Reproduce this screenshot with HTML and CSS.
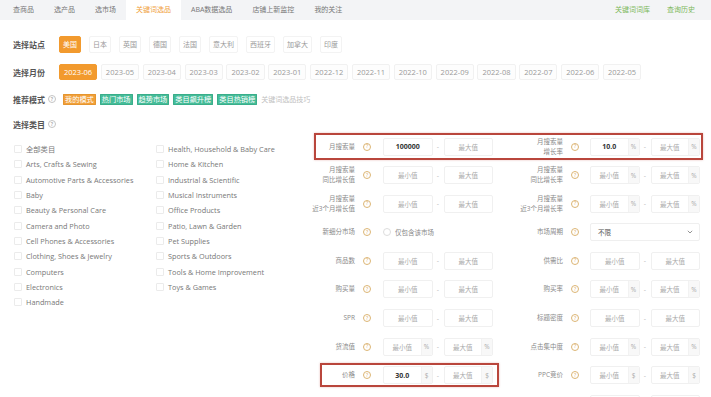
FILE: index.html
```html
<!DOCTYPE html>
<html lang="zh-CN">
<head>
    <meta charset="UTF-8">
    <meta name="viewport" content="width=device-width, initial-scale=1.0">
    <title>关键词选品</title>
    <link rel="stylesheet" href="styles.css">
</head>
<body>
    <div class="topnav">
        <div class="nav-left">
            <span class="nav-item">查商品</span>
            <span class="nav-item">选产品</span>
            <span class="nav-item">选市场</span>
            <span class="nav-item active">关键词选品</span>
            <span class="nav-item">ABA数据选品</span>
            <span class="nav-item">店铺上新监控</span>
            <span class="nav-item">我的关注</span>
        </div>
        <div class="nav-right">
            <span class="nav-link">关键词词库</span>
            <span class="nav-link">查询历史</span>
        </div>
    </div>

    <div class="main">
        <div class="filter-row site-row">
            <span class="filter-label">选择站点</span>
            <span class="opt active">美国</span>
            <span class="opt">日本</span>
            <span class="opt">英国</span>
            <span class="opt">德国</span>
            <span class="opt">法国</span>
            <span class="opt">意大利</span>
            <span class="opt">西班牙</span>
            <span class="opt">加拿大</span>
            <span class="opt">印度</span>
        </div>

        <div class="filter-row month-row">
            <span class="filter-label">选择月份</span>
            <span class="mopt active">2023-06</span>
            <span class="mopt">2023-05</span>
            <span class="mopt">2023-04</span>
            <span class="mopt">2023-03</span>
            <span class="mopt">2023-02</span>
            <span class="mopt">2023-01</span>
            <span class="mopt">2022-12</span>
            <span class="mopt">2022-11</span>
            <span class="mopt">2022-10</span>
            <span class="mopt">2022-09</span>
            <span class="mopt">2022-08</span>
            <span class="mopt">2022-07</span>
            <span class="mopt">2022-06</span>
            <span class="mopt">2022-05</span>
        </div>

        <div class="filter-row mode-row">
            <span class="filter-label">推荐模式 <i class="help gray">?</i></span>
            <div class="tags">
                <span class="tag orange">我的模式</span>
                <span class="tag">热门市场</span>
                <span class="tag">趋势市场</span>
                <span class="tag">类目飙升榜</span>
                <span class="tag">类目热销榜</span>
                <span class="tip">关键词选品技巧</span>
            </div>
        </div>

        <div class="filter-row cat-head">
            <span class="filter-label">选择类目 <i class="help gray">?</i></span>
        </div>

        <div class="content">
            <div class="cats">
                <ul class="cat-col">
                    <li><span class="box"></span>全部类目</li>
                    <li><span class="box"></span>Arts, Crafts &amp; Sewing</li>
                    <li><span class="box"></span>Automotive Parts &amp; Accessories</li>
                    <li><span class="box"></span>Baby</li>
                    <li><span class="box"></span>Beauty &amp; Personal Care</li>
                    <li><span class="box"></span>Camera and Photo</li>
                    <li><span class="box"></span>Cell Phones &amp; Accessories</li>
                    <li><span class="box"></span>Clothing, Shoes &amp; Jewelry</li>
                    <li><span class="box"></span>Computers</li>
                    <li><span class="box"></span>Electronics</li>
                    <li><span class="box"></span>Handmade</li>
                </ul>
                <ul class="cat-col">
                    <li><span class="box"></span>Health, Household &amp; Baby Care</li>
                    <li><span class="box"></span>Home &amp; Kitchen</li>
                    <li><span class="box"></span>Industrial &amp; Scientific</li>
                    <li><span class="box"></span>Musical Instruments</li>
                    <li><span class="box"></span>Office Products</li>
                    <li><span class="box"></span>Patio, Lawn &amp; Garden</li>
                    <li><span class="box"></span>Pet Supplies</li>
                    <li><span class="box"></span>Sports &amp; Outdoors</li>
                    <li><span class="box"></span>Tools &amp; Home Improvement</li>
                    <li><span class="box"></span>Toys &amp; Games</li>
                </ul>
            </div>

            <div class="form">
                <div class="form-row mark">
                    <div class="field field-l">
                        <span class="f-label">月搜索量</span><i class="help">?</i>
                        <div class="range">
                            <div class="inp filled">100000</div><span class="dash">-</span><div class="inp">最大值</div>
                        </div>
                    </div>
                    <div class="field field-r">
                        <span class="f-label"><span>月搜索量</span><span>增长率</span></span><i class="help">?</i>
                        <div class="range">
                            <div class="inp filled"><span class="val">10.0</span><span class="addon">%</span></div><span class="dash">-</span><div class="inp"><span class="val">最大值</span><span class="addon">%</span></div>
                        </div>
                    </div>
                </div>

                <div class="form-row">
                    <div class="field field-l">
                        <span class="f-label"><span>月搜索量</span><span>同比增长值</span></span><i class="help">?</i>
                        <div class="range">
                            <div class="inp">最小值</div><span class="dash">-</span><div class="inp">最大值</div>
                        </div>
                    </div>
                    <div class="field field-r">
                        <span class="f-label"><span>月搜索量</span><span>同比增长率</span></span><i class="help">?</i>
                        <div class="range">
                            <div class="inp"><span class="val">最小值</span><span class="addon">%</span></div><span class="dash">-</span><div class="inp"><span class="val">最大值</span><span class="addon">%</span></div>
                        </div>
                    </div>
                </div>

                <div class="form-row">
                    <div class="field field-l">
                        <span class="f-label"><span>月搜索量</span><span>近3个月增长值</span></span><i class="help">?</i>
                        <div class="range">
                            <div class="inp">最小值</div><span class="dash">-</span><div class="inp">最大值</div>
                        </div>
                    </div>
                    <div class="field field-r">
                        <span class="f-label"><span>月搜索量</span><span>近3个月增长率</span></span><i class="help">?</i>
                        <div class="range">
                            <div class="inp"><span class="val">最小值</span><span class="addon">%</span></div><span class="dash">-</span><div class="inp"><span class="val">最大值</span><span class="addon">%</span></div>
                        </div>
                    </div>
                </div>

                <div class="form-row">
                    <div class="field field-l">
                        <span class="f-label">新细分市场</span><i class="help">?</i>
                        <label class="radio"><span class="dot"></span>仅包含该市场</label>
                    </div>
                    <div class="field field-r">
                        <span class="f-label">市场周期</span><i class="help">?</i>
                        <div class="select">
                            <span>不限</span>
                            <svg width="6" height="4" viewBox="0 0 6 4"><path d="M0.8 0.8 L3 3 L5.2 0.8" fill="none" stroke="#888" stroke-width="0.9"/></svg>
                        </div>
                    </div>
                </div>

                <div class="form-row">
                    <div class="field field-l">
                        <span class="f-label">商品数</span><i class="help">?</i>
                        <div class="range">
                            <div class="inp">最小值</div><span class="dash">-</span><div class="inp">最大值</div>
                        </div>
                    </div>
                    <div class="field field-r">
                        <span class="f-label">供需比</span><i class="help">?</i>
                        <div class="range">
                            <div class="inp">最小值</div><span class="dash">-</span><div class="inp">最大值</div>
                        </div>
                    </div>
                </div>

                <div class="form-row">
                    <div class="field field-l">
                        <span class="f-label">购买量</span><i class="help">?</i>
                        <div class="range">
                            <div class="inp">最小值</div><span class="dash">-</span><div class="inp">最大值</div>
                        </div>
                    </div>
                    <div class="field field-r">
                        <span class="f-label">购买率</span><i class="help">?</i>
                        <div class="range">
                            <div class="inp"><span class="val">最小值</span><span class="addon">%</span></div><span class="dash">-</span><div class="inp"><span class="val">最大值</span><span class="addon">%</span></div>
                        </div>
                    </div>
                </div>

                <div class="form-row">
                    <div class="field field-l">
                        <span class="f-label">SPR</span><i class="help">?</i>
                        <div class="range">
                            <div class="inp">最小值</div><span class="dash">-</span><div class="inp">最大值</div>
                        </div>
                    </div>
                    <div class="field field-r">
                        <span class="f-label">标题密度</span><i class="help">?</i>
                        <div class="range">
                            <div class="inp">最小值</div><span class="dash">-</span><div class="inp">最大值</div>
                        </div>
                    </div>
                </div>

                <div class="form-row">
                    <div class="field field-l">
                        <span class="f-label">货流值</span><i class="help">?</i>
                        <div class="range">
                            <div class="inp"><span class="val">最小值</span><span class="addon">%</span></div><span class="dash">-</span><div class="inp"><span class="val">最大值</span><span class="addon">%</span></div>
                        </div>
                    </div>
                    <div class="field field-r">
                        <span class="f-label">点击集中度</span><i class="help">?</i>
                        <div class="range">
                            <div class="inp"><span class="val">最小值</span><span class="addon">%</span></div><span class="dash">-</span><div class="inp"><span class="val">最大值</span><span class="addon">%</span></div>
                        </div>
                    </div>
                </div>

                <div class="form-row">
                    <div class="field field-l mark">
                        <span class="f-label">价格</span><i class="help">?</i>
                        <div class="range">
                            <div class="inp filled"><span class="val">30.0</span><span class="addon">$</span></div><span class="dash">-</span><div class="inp"><span class="val">最大值</span><span class="addon">$</span></div>
                        </div>
                    </div>
                    <div class="field field-r">
                        <span class="f-label">PPC竞价</span><i class="help">?</i>
                        <div class="range">
                            <div class="inp"><span class="val">最小值</span><span class="addon">$</span></div><span class="dash">-</span><div class="inp"><span class="val">最大值</span><span class="addon">$</span></div>
                        </div>
                    </div>
                </div>

                <!-- next row only peeks in at the bottom edge -->
                <div class="form-row">
                    <div class="field field-l"></div>
                    <div class="field field-r">
                        <span class="f-label"></span><span class="help-space"></span>
                        <div class="range">
                            <div class="inp"></div><span class="dash"></span><div class="inp"></div>
                        </div>
                    </div>
                </div>
            </div>
        </div>
    </div>
</body>
</html>
```

FILE: styles.css
```css
html, body{
    overflow: hidden;
}
body{
    margin: 0;
    padding: 0;
    font-family: "Open Sans", "Noto Sans CJK SC", sans-serif;
    background-color: #fff;
    color: #666;
}

/* top navigation */
.topnav{
    display: flex;
    justify-content: space-between;
    height: 20px;
    padding: 0 16px 0 3px;
    background-color: #f3f4f6;
}
.nav-left{
    display: flex;
}
.nav-item{
    padding: 0 10px;
    font-size: 7px;
    line-height: 20px;
    color: #777;
}
.nav-item.active{
    background-color: #fff;
    color: #f0a03a;
}
.nav-right{
    display: flex;
    gap: 17px;
}
.nav-link{
    font-size: 7px;
    line-height: 20px;
    color: #7cb85a;
}

/* filter rows */
.main{
    padding: 16px 0 0 13px;
}
.filter-row{
    display: flex;
    align-items: center;
}
.site-row{
    height: 17px;
}
.month-row{
    height: 16px;
    margin-top: 11px;
}
.mode-row{
    height: 16px;
    margin-top: 11px;
}
.cat-head{
    height: 16px;
    margin-top: 9px;
}
.filter-label{
    display: flex;
    align-items: center;
    gap: 3px;
    width: 46px;
    flex-shrink: 0;
    font-size: 8px;
    font-weight: bold;
    color: #555;
}
.help{
    display: inline-flex;
    align-items: center;
    justify-content: center;
    width: 6px;
    height: 6px;
    border: 1px solid #dcb574;
    border-radius: 50%;
    font-style: normal;
    font-size: 5px;
    line-height: 1;
    color: #d9ad63;
    flex-shrink: 0;
}
.help.gray{
    border-color: #c4c4c4;
    color: #b5b5b5;
}
.help-space{
    width: 8px;
    flex-shrink: 0;
    margin-right: 11px;
}

.opt{
    padding: 0 3px;
    margin-right: 8px;
    border: 1px solid #f3f3f3;
    border-radius: 2px;
    font-size: 7px;
    line-height: 15px;
    color: #999;
}
.opt.active, .mopt.active{
    background-color: #f29a2e;
    border-color: #f29a2e;
    color: #fff;
}
.mopt{
    padding: 0 4px;
    margin-right: 3.7px;
    border: 1px solid #f1f1f1;
    border-radius: 2px;
    font-size: 7.5px;
    line-height: 14px;
    color: #999;
    background-color: #fdfdfd;
}

.tags{
    display: flex;
    align-items: center;
    gap: 4px;
    margin-left: 4px;
}
.tag{
    padding: 0 2px;
    border-radius: 1px;
    background-color: #45bc98;
    box-shadow: inset 0 0 0 0.5px #2f9f7d;
    font-size: 7.2px;
    line-height: 11px;
    color: #fff;
}
.tag.orange{
    background-color: #f1a03a;
    box-shadow: inset 0 0 0 0.5px #d98a25;
}
.tip{
    font-size: 7px;
    color: #c0c0c0;
}

/* categories */
.content{
    display: flex;
    margin-top: 1px;
}
.cats{
    display: flex;
    width: 301px;
    flex-shrink: 0;
    padding-top: 8.5px;
}
.cat-col{
    width: 142px;
    margin: 0;
    padding: 0;
    list-style: none;
}
.cat-col li{
    display: flex;
    align-items: center;
    height: 15.33px;
    font-size: 7.3px;
    color: #777;
    white-space: nowrap;
}
.box{
    width: 6px;
    height: 6px;
    margin: 0 4px 0 1px;
    border: 1px solid #ebebeb;
    border-radius: 1px;
    flex-shrink: 0;
}

/* search form */
.form{
    width: 389px;
}
.form-row{
    display: flex;
    height: 27px;
    margin-bottom: 1.6px;
    padding-right: 1px;
    border: 2px solid transparent;
    box-sizing: border-box;
}
.form-row.mark{
    border-color: #b9463c;
    box-shadow: 0 0 2px rgba(185, 70, 60, 0.35);
}
.field{
    display: flex;
    align-items: center;
    position: relative;
}
.field-l{
    width: 177px;
}
.field.mark::after{
    content: "";
    position: absolute;
    left: 4px;
    right: -6px;
    top: -0.5px;
    bottom: -0.5px;
    border: 2px solid #b9463c;
    box-shadow: 0 0 2px rgba(185, 70, 60, 0.35);
}
.f-label{
    display: flex;
    flex-direction: column;
    align-items: flex-end;
    flex-shrink: 0;
    margin-right: 8px;
    font-size: 6.5px;
    line-height: 10px;
    color: #8a8a8a;
    white-space: nowrap;
}
.field-l .f-label{
    width: 39px;
}
.field-r .f-label{
    width: 70px;
}
.field-l .help{
    margin-right: 12px;
}
.field-r .help{
    margin-right: 11px;
}
.range{
    display: flex;
    align-items: center;
    width: 110px;
}
.inp{
    display: flex;
    align-items: center;
    justify-content: center;
    flex: 1;
    height: 18px;
    border: 1px solid #f0f0f0;
    border-radius: 2px;
    box-sizing: border-box;
    font-size: 6.5px;
    color: #aaa;
    overflow: hidden;
}
.inp .val{
    flex: 1;
    text-align: center;
}
.addon{
    width: 10px;
    align-self: stretch;
    display: flex;
    align-items: center;
    justify-content: center;
    border-left: 1px solid #f2f2f2;
    background-color: #f8f8f8;
    color: #aaa;
}
.inp.filled{
    font-size: 7px;
    font-weight: bold;
    color: #333;
}
.inp.filled .addon{
    font-size: 6.5px;
    font-weight: normal;
    color: #aaa;
}
.dash{
    width: 11px;
    text-align: center;
    font-size: 7px;
    color: #bbb;
}
.radio{
    display: flex;
    align-items: center;
    font-size: 6.5px;
    color: #888;
}
.dot{
    width: 6px;
    height: 6px;
    margin-right: 4px;
    border: 1px solid #ddd;
    border-radius: 50%;
}
.select{
    display: flex;
    align-items: center;
    justify-content: space-between;
    width: 110px;
    height: 18px;
    padding: 0 6px 0 7px;
    border: 1px solid #efefef;
    border-radius: 2px;
    box-sizing: border-box;
    font-size: 6.5px;
    color: #555;
}
```
